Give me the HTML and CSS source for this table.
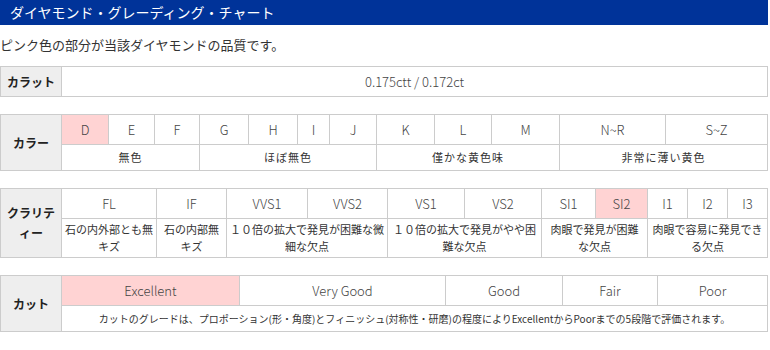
FILE: index.html
```html
<!DOCTYPE html>
<html lang="ja">
<head>
    <meta charset="UTF-8">
    <title>ダイヤモンド・グレーディング・チャート</title>
    <link rel="stylesheet" href="styles.css">
</head>
<body>
    <h2 class="chart-title">ダイヤモンド・グレーディング・チャート</h2>
    <p class="intro">ピンク色の部分が当該ダイヤモンドの品質です。</p>

    <!-- カラット -->
    <table class="grade-table">
        <colgroup>
            <col class="col-label">
            <col>
        </colgroup>
        <tr class="row-main">
            <th>カラット</th>
            <td>0.175ctt / 0.172ct</td>
        </tr>
    </table>

    <!-- カラー -->
    <table class="grade-table">
        <colgroup>
            <col class="col-label">
            <col style="width:47px"><col style="width:46px"><col style="width:45px">
            <col style="width:49px"><col style="width:49px"><col style="width:32px">
            <col style="width:47px"><col style="width:58px"><col style="width:57px">
            <col style="width:68px"><col style="width:106px"><col style="width:102px">
        </colgroup>
        <tr class="row-main">
            <th rowspan="2">カラー</th>
            <td class="current">D</td>
            <td>E</td>
            <td>F</td>
            <td>G</td>
            <td>H</td>
            <td>I</td>
            <td>J</td>
            <td>K</td>
            <td>L</td>
            <td>M</td>
            <td>N~R</td>
            <td>S~Z</td>
        </tr>
        <tr class="row-note row-spaced">
            <td colspan="3">無色</td>
            <td colspan="4">ほぼ無色</td>
            <td colspan="3">僅かな黄色味</td>
            <td colspan="2">非常に薄い黄色</td>
        </tr>
    </table>

    <!-- クラリティー -->
    <table class="grade-table">
        <colgroup>
            <col class="col-label">
            <col style="width:95px"><col style="width:70px"><col style="width:81px">
            <col style="width:80px"><col style="width:77px"><col style="width:77px">
            <col style="width:54px"><col style="width:52px"><col style="width:40px">
            <col style="width:40px"><col style="width:40px">
        </colgroup>
        <tr class="row-main">
            <th rowspan="2">クラリテ<br>ィー</th>
            <td>FL</td>
            <td>IF</td>
            <td>VVS1</td>
            <td>VVS2</td>
            <td>VS1</td>
            <td>VS2</td>
            <td>SI1</td>
            <td class="current">SI2</td>
            <td>I1</td>
            <td>I2</td>
            <td>I3</td>
        </tr>
        <tr class="row-note row-tall">
            <td>石の内外部とも無<br>キズ</td>
            <td>石の内部無<br>キズ</td>
            <td colspan="2">１０倍の拡大で発見が困難な微<br>細な欠点</td>
            <td colspan="2">１０倍の拡大で発見がやや困<br>難な欠点</td>
            <td colspan="2">肉眼で発見が困難<br>な欠点</td>
            <td colspan="3">肉眼で容易に発見でき<br>る欠点</td>
        </tr>
    </table>

    <!-- カット -->
    <table class="grade-table">
        <colgroup>
            <col class="col-label">
            <col style="width:178px"><col style="width:206px"><col style="width:117px">
            <col style="width:95px"><col style="width:110px">
        </colgroup>
        <tr class="row-main">
            <th rowspan="2">カット</th>
            <td class="current">Excellent</td>
            <td>Very Good</td>
            <td>Good</td>
            <td>Fair</td>
            <td>Poor</td>
        </tr>
        <tr class="row-note row-small">
            <td colspan="5">カットのグレードは、プロポーション(形・角度)とフィニッシュ(対称性・研磨)の程度によりExcellentからPoorまでの5段階で評価されます。</td>
        </tr>
    </table>
</body>
</html>
```

FILE: styles.css
```css
body {
    margin: 0;
    width: 768px;
    font-family: "Noto Sans CJK JP", "DejaVu Sans", sans-serif;
    color: #333;
}
.chart-title {
    margin: 0;
    height: 25px;
    padding-left: 10px;
    background-color: #003399;
    color: #fff;
    font-size: 14px;
    font-weight: normal;
    line-height: 25px;
}
.intro {
    margin: 10px 0 11px;
    font-size: 13px;
    line-height: 20px;
}
.grade-table {
    width: 768px;
    table-layout: fixed;
    border-collapse: collapse;
    margin-bottom: 17px;
}
.col-label {
    width: 61px;
}
.grade-table th,
.grade-table td {
    border: 1px solid #ccc;
    padding: 0;
    text-align: center;
}
.grade-table th {
    background-color: #eee;
    font-size: 12px;
    line-height: 20px;
    font-weight: bold;
    color: #222;
}
.row-main td {
    height: 29px;
    font-size: 13px;
    font-weight: 300;
    color: #444;
}
.row-note td {
    height: 25px;
    font-size: 11px;
    line-height: 17px;
    color: #333;
}
.row-spaced td {
    letter-spacing: 1px;
}
.row-tall td {
    height: 38px;
}
.row-small td {
    font-size: 10px;
}
.grade-table td.current {
    background-color: #ffd3d3;
}
```
